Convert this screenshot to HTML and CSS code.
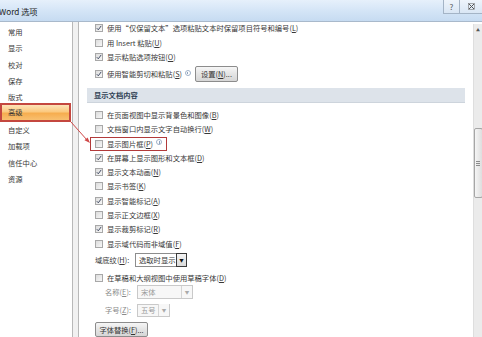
FILE: index.html
```html
<!DOCTYPE html>
<html lang="zh-CN">
  <head>
    <meta charset="UTF-8" />
    <title>Word 选项</title>
    <link rel="stylesheet" href="styles.css">
  </head>
  <body>
    <div class="window">
      <header class="titlebar">
        <span class="title">Word 选项</span>
        <div class="caption">
          <span class="cbtn help">?</span>
          <span class="cbtn close">
            <svg width="7" height="7" viewBox="0 0 7 7"><path d="M1 1L6 6M6 1L1 6" stroke="#555" stroke-width="1" fill="none"/><rect x="0.5" y="0.5" width="6" height="6" fill="none" stroke="#777" stroke-width="0.6"/></svg>
          </span>
        </div>
      </header>

      <div class="main">
        <nav class="nav">
          <div class="nav-item">常用</div>
          <div class="nav-item">显示</div>
          <div class="nav-item">校对</div>
          <div class="nav-item">保存</div>
          <div class="nav-item">版式</div>
          <div class="nav-item active">高级</div>
          <div class="nav-item">自定义</div>
          <div class="nav-item">加载项</div>
          <div class="nav-item">信任中心</div>
          <div class="nav-item">资源</div>
        </nav>

        <div class="panel">
          <div class="scroll">
            <div class="list">
              <div class="row"><span class="box on"></span>使用“仅保留文本”选项粘贴文本时保留项目符号和编号(<u>L</u>)</div>
              <div class="row"><span class="box"></span>用 Insert 粘贴(<u>U</u>)</div>
              <div class="row"><span class="box on"></span>显示粘贴选项按钮(<u>O</u>)</div>
              <div class="row row-tall">
                <span class="box on"></span>使用智能剪切和粘贴(<u>S</u>)
                <span class="info"></span>
                <button class="btn btn-set">设置(<u>N</u>)...</button>
              </div>

              <div class="section">显示文档内容</div>

              <div class="group">
                <div class="row"><span class="box"></span>在页面视图中显示背景色和图像(<u>B</u>)</div>
                <div class="row"><span class="box"></span>文档窗口内显示文字自动换行(<u>W</u>)</div>
                <div class="row"><span class="mark"><span class="box"></span>显示图片框(<u>P</u>)<span class="info"></span></span></div>
                <div class="row"><span class="box on"></span>在屏幕上显示图形和文本框(<u>D</u>)</div>
                <div class="row"><span class="box on"></span>显示文本动画(<u>N</u>)</div>
                <div class="row"><span class="box"></span>显示书签(<u>K</u>)</div>
                <div class="row"><span class="box on"></span>显示智能标记(<u>A</u>)</div>
                <div class="row"><span class="box"></span>显示正文边框(<u>X</u>)</div>
                <div class="row"><span class="box on"></span>显示裁剪标记(<u>R</u>)</div>
                <div class="row"><span class="box"></span>显示域代码而非域值(<u>F</u>)</div>
              </div>

              <div class="row row-field">
                <span class="label">域底纹(<u>H</u>):</span>
                <span class="select">
                  <span class="select-text">选取时显示</span>
                  <span class="select-arrow">▼</span>
                </span>
              </div>
              <div class="row row-draft"><span class="box"></span>在草稿和大纲视图中使用草稿字体(<u>D</u>)</div>
              <div class="row row-sub">
                <span class="label sub-label">名称(<u>E</u>):</span>
                <span class="select disabled wide">
                  <span class="select-text">宋体</span>
                  <span class="select-arrow">▼</span>
                </span>
              </div>
              <div class="row row-sub row-size">
                <span class="label sub-label">字号(<u>Z</u>):</span>
                <span class="select disabled narrow">
                  <span class="select-text">五号</span>
                  <span class="select-arrow">▼</span>
                </span>
              </div>
              <div class="row row-btn">
                <button class="btn btn-font">字体替换(<u>F</u>)...</button>
              </div>
            </div>
          </div>

          <div class="scrollbar">
            <span class="up">▲</span>
            <span class="thumb"><span class="grip"></span></span>
          </div>
        </div>
      </div>

      <svg class="callout" width="482" height="337" viewBox="0 0 482 337">
        <line x1="71" y1="122" x2="87" y2="140" stroke="#d04848" stroke-width="1"/>
        <path d="M90 143 L84.5 140.2 L87.6 137.4 Z" fill="#d04848"/>
      </svg>
    </div>
  </body>
</html>
```

FILE: styles.css
```css
* {
  margin: 0;
  padding: 0;
  box-sizing: border-box;
}
body {
  width: 482px;
  height: 337px;
  overflow: hidden;
  font-family: "Noto Sans CJK SC", "DejaVu Sans", sans-serif;
  font-size: 7.3px;
  color: #383838;
  background-color: #fff;
}
u {
  text-decoration: underline;
  text-underline-offset: 1px;
}
.window {
  position: relative;
  width: 482px;
  height: 337px;
  display: flex;
  flex-direction: column;
}

/* title bar */
.titlebar {
  height: 22px;
  flex-shrink: 0;
  display: flex;
  justify-content: space-between;
  background: linear-gradient(#e6f0fb, #d3e4f6 55%, #c6dbf1);
  border-bottom: 1px solid #a9b9cb;
}
.title {
  margin-left: -1px;
  padding-top: 5px;
  font-size: 8.2px;
  color: #222;
}
.caption {
  display: flex;
  height: 14px;
}
.cbtn {
  display: flex;
  align-items: center;
  justify-content: center;
  height: 14px;
  border-left: 1px solid #a4b4c6;
  border-bottom: 1px solid #a4b4c6;
  background: linear-gradient(#eef4fb, #d9e6f4);
  color: #555;
  font-size: 8px;
}
.help {
  width: 16px;
}
.close {
  width: 23px;
}

/* main area */
.main {
  flex: 1;
  display: flex;
  background-color: #f1f1f1;
  min-height: 0;
}
.nav {
  width: 73px;
  flex-shrink: 0;
  background-color: #fff;
  border-right: 1px solid #b8b8b8;
  padding-top: 2px;
}
.nav-item {
  height: 16.33px;
  line-height: 16.33px;
  padding-left: 8px;
}
.nav-item.active {
  height: 19px;
  line-height: 15px;
  margin: -2.5px 1px -0.17px 0;
  padding-left: 6px;
  border: 2px solid #c4473f;
  background: linear-gradient(#fde3b8, #fbc97f 45%, #f6ad4f 55%, #f8c070);
}

.panel {
  flex: 1;
  display: flex;
  margin-left: 5px;
  background-color: #fff;
  border-left: 1px solid #b8b8b8;
  min-width: 0;
}
.scroll {
  flex: 1;
  overflow: hidden;
}
.list {
  margin-top: -1.25px;
  padding-left: 8px;
  padding-right: 8px;
}
.row {
  display: flex;
  align-items: center;
  height: 14.5px;
  padding-left: 8px;
  white-space: nowrap;
}
.group .row {
  height: 14.3px;
}
.row-tall {
  height: 19.5px;
}
.box {
  width: 8px;
  height: 8px;
  margin-right: 4px;
  flex-shrink: 0;
  border: 1px solid #a8a8a8;
  background: linear-gradient(135deg, #dcdcdc, #f7f7f7);
}
.box.on {
  background: url("data:image/svg+xml,%3Csvg xmlns='http://www.w3.org/2000/svg' width='6' height='6' viewBox='0 0 6 6'%3E%3Cpath d='M0.8 3.2 L2.3 4.8 L5.2 0.9' stroke='%23444e66' stroke-width='1' fill='none'/%3E%3C/svg%3E") center / 6px 6px no-repeat,
    linear-gradient(135deg, #dcdcdc, #f7f7f7);
}
.info {
  width: 6px;
  height: 6px;
  margin-left: 3px;
  margin-top: -3px;
  border: 1px solid #9fb1c9;
  border-radius: 50%;
  position: relative;
}
.info::after {
  content: "";
  position: absolute;
  left: 1.5px;
  top: 1px;
  width: 1px;
  height: 2.5px;
  background-color: #8ea3bf;
}
.mark {
  display: flex;
  align-items: center;
  height: 14px;
  margin-left: -5px;
  padding: 0 4px;
  border: 1px solid #b23a3a;
}
.btn {
  font-family: inherit;
  font-size: 7.3px;
  color: #333;
  height: 15px;
  padding: 0 5px;
  border: 1px solid #8c8c8c;
  border-radius: 2px;
  background: linear-gradient(#f6f6f6, #e4e4e4 50%, #d6d6d6);
}
.btn-set {
  width: 43px;
  margin-left: 4px;
  height: 16px;
}

.section {
  margin-top: 4.25px;
  height: 15px;
  line-height: 15px;
  padding-left: 7px;
  font-weight: bold;
  color: #2d3e52;
  background-color: #dde3ea;
  border-bottom: 1px solid #cdd4dc;
}
.group {
  margin-top: 4.85px;
}

.row-field {
  height: 17px;
  margin-top: 1px;
}
.label {
  width: 40px;
  flex-shrink: 0;
}
.select {
  display: flex;
  align-items: center;
  height: 14px;
  width: 52px;
  border: 1px solid #8d8d8d;
  background-color: #fff;
}
.select-text {
  flex: 1;
  padding-left: 3px;
}
.select-arrow {
  display: flex;
  align-items: center;
  justify-content: center;
  width: 11px;
  height: 14px;
  margin: -1px -1px -1px 0;
  border: 1px solid #3a3a3a;
  background: linear-gradient(#f4f4f4, #dadada);
  font-size: 4.5px;
  color: #111;
}
.row-draft {
  margin-top: 2px;
}
.row-sub {
  height: 14px;
  padding-left: 18px;
}
.sub-label {
  width: 32px;
  color: #8a8a8a;
}
.select.disabled {
  border-color: #c9c9c9;
  background-color: #f7f7f7;
  color: #999;
}
.select.disabled .select-arrow {
  border: none;
  border-left: 1px solid #d5d5d5;
  margin: 0;
  height: 12px;
  background: #f7f7f7;
  color: #aaa;
}
.wide {
  width: 56px;
}
.narrow {
  width: 33px;
}
.row-size {
  margin-top: 4px;
}
.row-size .select {
  height: 13px;
}
.row-btn {
  margin-top: 5px;
  height: 15px;
}
.btn-font {
  width: 53px;
  padding: 0 2px;
}

/* scrollbar */
.scrollbar {
  width: 9px;
  flex-shrink: 0;
  margin-top: 2px;
  display: flex;
  flex-direction: column;
  align-items: center;
  background-color: #ebebeb;
  border-left: 1px solid #dedede;
}
.up {
  font-size: 4px;
  color: #555;
  margin-top: 3px;
}
.thumb {
  width: 9px;
  height: 70px;
  margin-top: 95px;
  display: flex;
  align-items: center;
  justify-content: center;
  border: 1px solid #a6a6a6;
  border-radius: 2px;
  background: linear-gradient(90deg, #f5f5f5, #dedede);
}
.grip {
  width: 4px;
  height: 5px;
  border-top: 1px solid #8c8c8c;
  border-bottom: 1px solid #8c8c8c;
  position: relative;
}
.grip::after {
  content: "";
  position: absolute;
  left: 0;
  right: 0;
  top: 1px;
  border-top: 1px solid #8c8c8c;
}

.callout {
  position: absolute;
  left: 0;
  top: 0;
  pointer-events: none;
}
```
